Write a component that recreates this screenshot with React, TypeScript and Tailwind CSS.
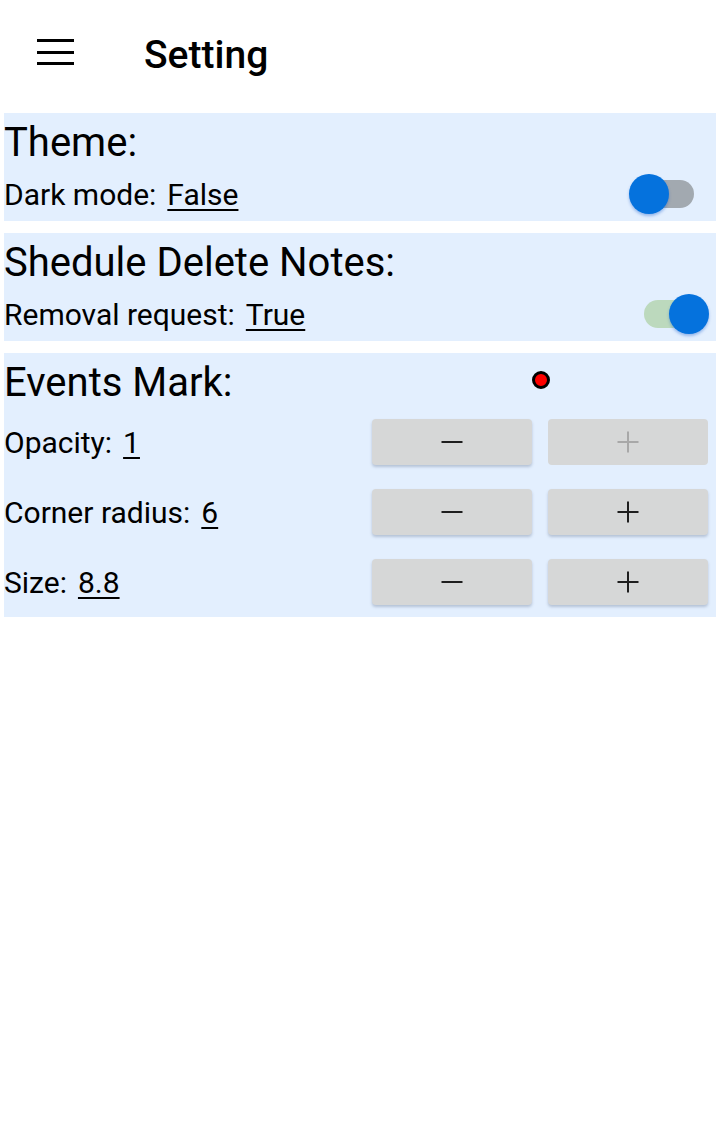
import React from 'react';

// toggle: track sits under the round thumb
function Toggle({ on }: { on: boolean }) {
  return (
    <div className="relative w-[80px] h-[40px] shrink-0">
      <div
        className={
          'absolute left-[15px] top-[6px] w-[50px] h-[28px] rounded-full ' +
          (on ? 'bg-[#bcd9bd]' : 'bg-[#a2a9b0]')
        }
      />
      <div
        className={
          'absolute top-0 w-[40px] h-[40px] rounded-full bg-[#0572dd] shadow-[0_2px_3px_rgba(5,80,200,0.35)] ' +
          (on ? 'left-[40px]' : 'left-0')
        }
      />
    </div>
  );
}

function Value({ children }: { children: React.ReactNode }) {
  return (
    <span className="ml-[11px] underline decoration-[2px] underline-offset-[4px]">{children}</span>
  );
}

function StepButton({ kind, disabled }: { kind: 'minus' | 'plus'; disabled?: boolean }) {
  const color = disabled ? '#a8a8a8' : '#1e1e1e';
  return (
    <button
      className={
        'h-[46px] w-[160px] rounded-[4px] bg-[#d6d7d7] flex items-center justify-center ' +
        (disabled ? '' : 'shadow-[0_2px_3px_rgba(60,80,110,0.28)]')
      }
    >
      <svg width="22" height="22" viewBox="0 0 22 22">
        <rect x="0.5" y="10" width="21" height="2" fill={color} />
        {kind === 'plus' && <rect x="10" y="0.5" width="2" height="21" fill={color} />}
      </svg>
    </button>
  );
}

const steps = [
  { label: 'Opacity:', value: '1', plusDisabled: true },
  { label: 'Corner radius:', value: '6', plusDisabled: false },
  { label: 'Size:', value: '8.8', plusDisabled: false },
];

export default function App() {
  return (
    <div className="min-h-[1132px] w-[720px] bg-white text-black font-['Roboto',_sans-serif]">
      {/* top bar */}
      <header className="h-[104px] flex items-center">
        <svg className="ml-[37px]" width="37" height="26" viewBox="0 0 37 26">
          <rect x="0" y="0" width="37" height="3" fill="#000" />
          <rect x="0" y="12" width="37" height="3" fill="#000" />
          <rect x="0" y="23" width="37" height="3" fill="#000" />
        </svg>
        <h1 className="ml-[70px] mt-[6px] text-[39px] font-medium leading-none">Setting</h1>
      </header>

      <main className="pt-[9px] px-[4px] flex flex-col gap-[12px]">
        <section className="bg-[#e3effe] pr-[7px]">
          <div className="h-[54px] pt-[5px] flex items-center text-[40px] leading-none">Theme:</div>
          <div className="h-[54px] flex items-center justify-between text-[30px]">
            <div>
              Dark mode:<Value>False</Value>
            </div>
            <Toggle on={false} />
          </div>
        </section>

        <section className="bg-[#e3effe] pr-[7px]">
          <div className="h-[54px] pt-[5px] flex items-center text-[40px] leading-none">Shedule Delete Notes:</div>
          <div className="h-[54px] flex items-center justify-between text-[30px]">
            <div>
              Removal request:<Value>True</Value>
            </div>
            <Toggle on={true} />
          </div>
        </section>

        <section className="bg-[#e3effe] pr-[8px] grid grid-cols-[1fr_160px_160px] gap-x-[16px]">
          <div className="h-[54px] pt-[5px] flex items-center text-[40px] leading-none">Events Mark:</div>
          <div className="col-span-2 h-[54px] flex items-center justify-center">
            <div className="ml-[2px] w-[18px] h-[18px] rounded-full bg-[#ff0000] border-[3px] border-black" />
          </div>
          {steps.map((s) => (
            <React.Fragment key={s.label}>
              <div className="h-[70px] flex items-center text-[30px]">
                <span>
                  {s.label}
                  <Value>{s.value}</Value>
                </span>
              </div>
              <div className="h-[70px] flex items-center">
                <StepButton kind="minus" />
              </div>
              <div className="h-[70px] flex items-center">
                <StepButton kind="plus" disabled={s.plusDisabled} />
              </div>
            </React.Fragment>
          ))}
        </section>
      </main>
    </div>
  );
}
